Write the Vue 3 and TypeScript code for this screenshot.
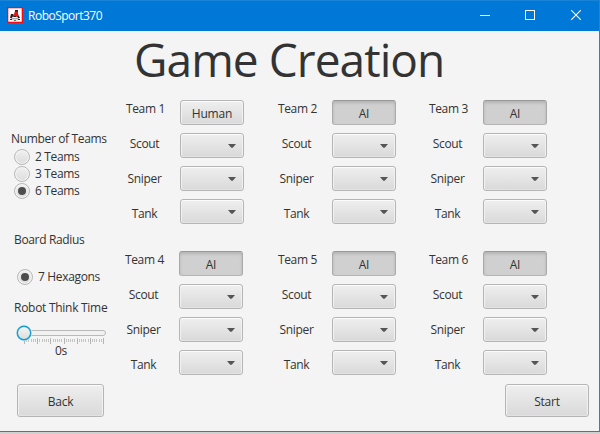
<script setup lang="ts">
import { ref } from 'vue'

interface Team {
  id: number
  kind: 'Human' | 'AI'
}

const robots: string[] = ['Scout', 'Sniper', 'Tank']
const rows = ref<Team[][]>([
  [
    { id: 1, kind: 'Human' },
    { id: 2, kind: 'AI' },
    { id: 3, kind: 'AI' },
  ],
  [
    { id: 4, kind: 'AI' },
    { id: 5, kind: 'AI' },
    { id: 6, kind: 'AI' },
  ],
])

const teamCounts: number[] = [2, 3, 6]
const selectedCount = ref<number>(6)

const ticks: { x: number; major: boolean }[] = Array.from({ length: 37 }, (_, i) => ({
  x: Math.round((i * 79) / 36),
  major: i % 6 === 0,
}))

function toggle(team: Team): void {
  team.kind = team.kind === 'AI' ? 'Human' : 'AI'
}
</script>

<template>
  <div class="window">
    <header class="titlebar">
      <svg class="logo" width="16" height="16" viewBox="0 0 16 16">
        <rect width="16" height="16" fill="#f80a10" />
        <rect x="1.300" y="1.300" width="13.400" height="13.400" fill="#fff" />
        <path d="M4 9l3-2 1-3h3v3l1 2-3 1H6z" fill="#e5161a" />
        <path d="M8 3h3v1.500H8zM4 7h2v1.500L5 11H3zM10 9l2 0 1 2h-2zM7 9h2v1H7zM3 12h2v1H3zM7 13h2v.8H7zM11 12h2v1h-2z" fill="#222" />
        <path d="M4 11h8v1H4zM5 12.500h6v.8H5z" fill="#aaa" />
      </svg>
      <span class="app-name">RoboSport370</span>
      <svg class="controls" width="101" height="11" viewBox="0 0 101 11" fill="none" stroke="#fff">
        <path d="M0 5.5h10" />
        <rect x="45.5" y=".5" width="9" height="9" />
        <path d="M91.2 .2l9.6 9.6M100.8 .2l-9.6 9.6" stroke-width="1.1" />
      </svg>
    </header>

    <h1 class="heading"><span>Game Creation</span></h1>

    <main class="content">
      <aside class="options">
        <div class="caption count-caption">Number of Teams</div>
        <div class="radios">
          <label v-for="n in teamCounts" :key="n" class="radio" @click="selectedCount = n">
            <span class="circle"><span v-if="selectedCount === n" class="dot"></span></span>
            <span>{{ n }} Teams</span>
          </label>
        </div>
        <div class="caption radius-caption">Board Radius</div>
        <label class="radio hexagons">
          <span class="circle"><span class="dot"></span></span>
          <span>7 Hexagons</span>
        </label>
        <div class="caption think-caption">Robot Think Time</div>
        <svg class="slider" width="94" height="22" viewBox="0 0 94 22">
          <defs>
            <linearGradient id="thumb" x1="0" y1="0" x2="0" y2="1">
              <stop offset="0" stop-color="#f5f5f5" />
              <stop offset="1" stop-color="#dcdcdc" />
            </linearGradient>
          </defs>
          <rect x="2.5" y="6.5" width="88" height="5" rx="2.5" fill="#f1f1f1" stroke="#b9b9b9" />
          <rect
            v-for="(t, i) in ticks"
            :key="i"
            :x="t.x + 9"
            :y="t.major ? 14 : 15"
            width="1"
            :height="t.major ? 6 : 3"
            :fill="t.major ? '#b5b5b5' : '#c4c4c4'"
          />
          <circle cx="9" cy="9" r="8" fill="#d4ecf5" />
          <circle cx="9" cy="9" r="6.7" fill="url(#thumb)" stroke="#159dce" stroke-width="1.4" />
        </svg>
        <div class="seconds">0s</div>
      </aside>

      <section class="teams">
        <div v-for="(row, r) in rows" :key="r" class="team-row" :class="{ lower: r === 1 }">
          <div v-for="team in row" :key="team.id" class="team">
            <div class="labels">
              <span>Team {{ team.id }}</span>
              <span v-for="robot in robots" :key="robot" class="robot">{{ robot }}</span>
            </div>
            <div class="fields">
              <button class="btn toggle" :class="{ pressed: team.kind === 'AI' }" @click="toggle(team)">
                {{ team.kind }}
              </button>
              <button v-for="robot in robots" :key="robot" class="btn combo">
                <svg width="8" height="4" viewBox="0 0 8 4"><path d="M0 0h8L5.200 3.200Q4 4.400 2.800 3.200z" fill="#555" /></svg>
              </button>
            </div>
          </div>
        </div>
      </section>
    </main>

    <footer class="actions">
      <button class="btn back">Back</button>
      <button class="btn start">Start</button>
    </footer>
  </div>
</template>

<style>
body {
  margin: 0;
  background: #d0d0d0;
}
</style>

<style scoped>
.window {
  box-sizing: border-box;
  width: 600px;
  height: 432px;
  display: flex;
  flex-direction: column;
  background: #f4f4f4;
  border-right: 1px solid #2a82ce;
  border-bottom: 1px solid #1a80d9;
  box-shadow: 0 1px 2px #888;
  color: #333;
  font-family: 'Open Sans', 'Noto Sans', sans-serif;
  font-size: 12px;
  line-height: 16px;
  letter-spacing: -0.34px;
  white-space: nowrap;
}
.titlebar {
  box-sizing: border-box;
  height: 31px;
  flex: none;
  display: flex;
  align-items: flex-start;
  padding: 6px 18px 0 7px;
  background: #0078d7;
  border-top: 1px solid #1883d7;
  color: #fff;
}
.app-name {
  margin: 1px 0 0 5px;
  letter-spacing: -0.5px;
}
.controls {
  margin: 3px 0 0 auto;
}
.heading {
  height: 69px;
  flex: none;
  margin: 0;
  padding-left: 134px;
  font-size: 46px;
  line-height: 57px;
  font-weight: 400;
  letter-spacing: -0.93px;
}
.content {
  display: flex;
  height: 284px;
  flex: none;
}
.options {
  width: 120px;
  flex: none;
  display: flex;
  flex-direction: column;
  align-items: flex-start;
}
.caption {
  padding-left: 14px;
}
.count-caption {
  padding: 31px 0 0 11px;
}
.radios {
  padding: 2px 0 0 14px;
}
.radio {
  display: flex;
  align-items: flex-start;
  gap: 5px;
  height: 17px;
}
.circle {
  box-sizing: border-box;
  width: 16px;
  height: 16px;
  display: flex;
  align-items: center;
  justify-content: center;
  border: 1px solid #b8b8b8;
  border-radius: 50%;
  background: linear-gradient(#f0f0f0, #dcdcdc);
  box-shadow: inset 0 0 0 1px #f6f6f6;
}
.dot {
  width: 8px;
  height: 8px;
  border-radius: 50%;
  background: #4d4d4d;
}
.radius-caption {
  padding-top: 32px;
}
.hexagons {
  padding: 21px 0 0 17px;
}
.think-caption {
  padding-top: 14px;
  letter-spacing: -0.28px;
}
.slider {
  display: block;
  margin: 8px 0 0 15px;
}
.seconds {
  margin: -3px 0 0 55px;
}
.teams {
  display: flex;
  flex-direction: column;
  gap: 27px;
}
.team-row {
  display: flex;
  gap: 27px;
}
.team-row .team:first-child {
  margin-right: 1px;
}
.lower .team:first-child {
  margin: 0 2px 0 -1px;
}
.team {
  display: flex;
  gap: 10px;
  height: 124px;
}
.labels {
  box-sizing: border-box;
  width: 50px;
  display: flex;
  flex-direction: column;
  align-items: center;
  gap: 19px;
  padding: 1px 0 0 1px;
}
.robot {
  padding-right: 2px;
}
.fields {
  display: flex;
  flex-direction: column;
  gap: 8px;
}
.btn {
  box-sizing: border-box;
  display: flex;
  align-items: center;
  justify-content: center;
  margin: 0;
  padding: 2px 0 0;
  color: #333;
  font: inherit;
  letter-spacing: -0.2px;
  border: 1px solid #b5b5b5;
  border-radius: 3px;
  background: linear-gradient(#efefef, #d9d9d9);
  box-shadow: inset 0 1px #fbfbfb, inset 1px 0 #f1f1f1, inset -1px 0 #f1f1f1, inset 0 -1px #e2e2e2;
}
.toggle,
.combo {
  width: 64px;
  height: 25px;
}
.pressed {
  border-color: #999 #aaa #b5b5b5;
  background: #d0d0d0;
  box-shadow: inset 0 2px 3px #b4b4b4;
}
.combo {
  justify-content: flex-end;
  padding: 1px 7px 0 0;
}
.actions {
  display: flex;
  justify-content: space-between;
  padding: 0 10px 0 17px;
}
.back {
  width: 87px;
  height: 33px;
}
.start {
  width: 84px;
  height: 33px;
}
</style>
